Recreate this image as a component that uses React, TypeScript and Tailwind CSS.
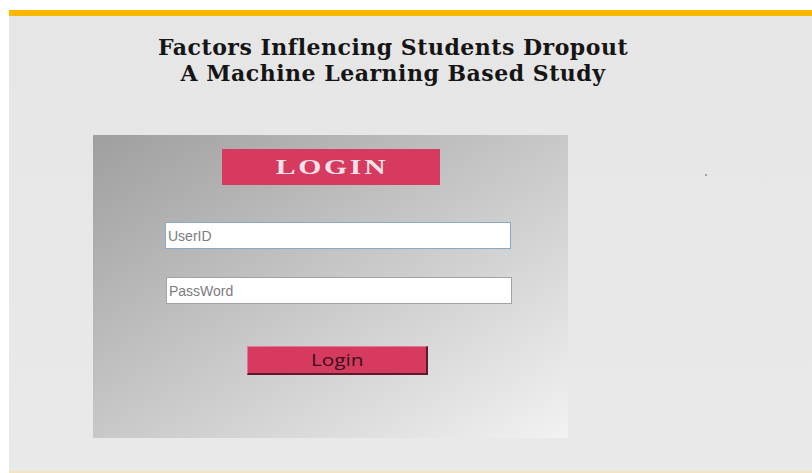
export default function App() {
  return (
    <div className="w-[812px] h-[473px] bg-white pl-[9px] pt-[10px] overflow-hidden">
      <div className="flex flex-col h-full">
        <div className="h-[6px] bg-[#fcb800]" />
        <div className="flex-1 flex flex-col bg-gradient-to-b from-[#e6e6e6] to-[#e9e9e9] relative">
          {/* title */}
          <div
            className="mt-[18px] ml-[4px] w-[760px] text-center text-[#151515] font-bold text-[22px] leading-[26px] tracking-[0.5px]"
            style={{ fontFamily: '"DejaVu Serif", serif' }}
          >
            <div>Factors Inflencing Students Dropout</div>
            <div>A Machine Learning Based Study</div>
          </div>

          {/* login panel */}
          <div className="mt-[49px] ml-[84px] w-[475px] h-[303px] flex flex-col items-start pt-[14px] bg-gradient-to-br from-[#9f9f9f] via-[#c8c8c8] to-[#f2f2f2]">
            <div className="ml-[129px] w-[218px] h-[36px] bg-[#d63b5f] flex items-center justify-center">
              <span
                className="inline-block scale-x-[1.35] pl-[2px] text-[#f5e2e8] font-bold text-[22px] leading-none tracking-[2px]"
                style={{ fontFamily: '"Liberation Serif", serif' }}
              >
                LOGIN
              </span>
            </div>
            <input
              placeholder="UserID"
              className="mt-[37px] ml-[72px] w-[346px] h-[27px] bg-white border border-[#86abc9] outline-none px-[2px] text-[14px] text-[#333] placeholder:text-[#7c7c7c]"
              style={{ fontFamily: '"Liberation Sans", sans-serif' }}
            />
            <input
              placeholder="PassWord"
              type="password"
              className="mt-[28px] ml-[73px] w-[346px] h-[27px] bg-white border border-[#a3a3a3] outline-none px-[2px] text-[14px] text-[#333] placeholder:text-[#7c7c7c]"
              style={{ fontFamily: '"Liberation Sans", sans-serif' }}
            />
            <button className="mt-[42px] ml-[154px] w-[181px] h-[29px] bg-[#d63b5f] border-t border-l border-[#e0788f] border-r-2 border-b-2 border-r-[#5c1b2b] border-b-[#5c1b2b] flex items-center justify-center">
              <span
                className="inline-block scale-x-[1.3] text-[#3b0f1d] text-[16px] leading-none font-medium"
                style={{ fontFamily: '"Open Sans", sans-serif' }}
              >
                Login
              </span>
            </button>
          </div>

          <div className="absolute left-[696px] top-[158px] w-[2px] h-[2px] rounded-full bg-[#8a8a8a]" />
          <div className="mt-auto h-[2px] bg-[#f3e4bf]" />
        </div>
      </div>
    </div>
  )
}
